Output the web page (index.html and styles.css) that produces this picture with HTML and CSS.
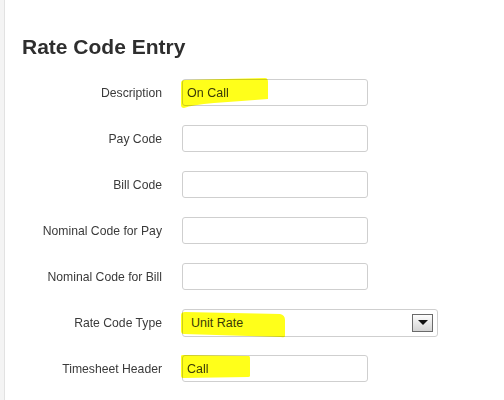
FILE: index.html
```html
<!DOCTYPE html>
<html lang="en">
<head>
    <meta charset="UTF-8">
    <meta name="viewport" content="width=device-width, initial-scale=1.0">
    <title>Rate Code Entry</title>
    <link rel="stylesheet" href="styles.css">
</head>
<body>
    <div class="page">
        <h1>Rate Code Entry</h1>
        <form class="entry-form">
            <label for="description">Description</label>
            <div class="field">
                <input id="description" type="text" value="On Call">
                <svg class="marker" width="88" height="30" viewBox="0 0 88 30">
                    <path d="M-1 4 Q-1 1 3 1 L83 -1 Q86 -1 86 3 L86 20 Q60 22 32 24 Q10 26 2 29 Q-1 29 -1 26 Z" />
                </svg>
            </div>

            <label for="payCode">Pay Code</label>
            <div class="field"><input id="payCode" type="text"></div>

            <label for="billCode">Bill Code</label>
            <div class="field"><input id="billCode" type="text"></div>

            <label for="nomPay">Nominal Code for Pay</label>
            <div class="field"><input id="nomPay" type="text"></div>

            <label for="nomBill">Nominal Code for Bill</label>
            <div class="field"><input id="nomBill" type="text"></div>

            <label>Rate Code Type</label>
            <div class="field wide">
                <div class="select">
                    <span class="select-value">Unit Rate</span>
                    <span class="select-btn"><span class="arrow"></span></span>
                </div>
                <svg class="marker" width="106" height="30" viewBox="0 0 106 30">
                    <path d="M-1 6 Q-1 3 3 3 L98 5 Q103 6 103 11 L103 27 Q103 29 99 28 L2 25 Q-1 25 -1 22 Z" />
                </svg>
            </div>

            <label for="tsHeader">Timesheet Header</label>
            <div class="field">
                <input id="tsHeader" type="text" value="Call">
                <svg class="marker" width="70" height="24" viewBox="0 0 70 24">
                    <path d="M-1 1 Q-1 0 1 0 L67 1 Q68 1 68 3 L68 21 Q68 22 66 22 L1 23 Q-1 23 -1 21 Z" />
                </svg>
            </div>
        </form>
    </div>
</body>
</html>
```
FILE: styles.css
```css
body {
    margin: 0;
    background: #f4f4f4;
    font-family: "Liberation Sans", Arial, sans-serif;
    color: #333;
}
.page {
    margin-left: 4px;
    border-left: 1px solid #e2e2e2;
    background: white;
    min-height: 400px;
    padding: 35px 0 0 17px;
    box-sizing: border-box;
}
h1 {
    margin: 0 0 20px 0;
    font-size: 21px;
    line-height: 24px;
    font-weight: bold;
    color: #2e2e2e;
}
.entry-form {
    display: grid;
    grid-template-columns: 140px auto;
    grid-auto-rows: 27px;
    column-gap: 20px;
    row-gap: 19px;
    align-items: center;
    justify-items: start;
}
.entry-form label {
    justify-self: end;
    font-size: 12.2px;
    color: #3a3a3a;
}
.field {
    position: relative;
    width: 186px;
    height: 27px;
}
.field.wide {
    width: 256px;
    height: 28px;
}
.field input {
    box-sizing: border-box;
    width: 100%;
    height: 27px;
    margin: 0;
    padding: 0 4px;
    border: 1px solid #cfcfcf;
    border-radius: 3px;
    font-family: inherit;
    font-size: 12.5px;
    color: #3a3a3a;
    background: white;
}
.select {
    box-sizing: border-box;
    width: 100%;
    height: 28px;
    border: 1px solid #cfcfcf;
    border-radius: 3px;
    display: flex;
    align-items: center;
    justify-content: space-between;
    padding: 0 4px 0 8px;
    font-size: 12.5px;
    color: #3a3a3a;
    background: white;
}
.select-btn {
    box-sizing: border-box;
    width: 21px;
    height: 18px;
    border: 1px solid #6a6a6a;
    background: linear-gradient(#fdfdfd, #d4d4d4);
    display: flex;
    align-items: center;
    justify-content: center;
}
.arrow {
    width: 0;
    height: 0;
    border-left: 5px solid transparent;
    border-right: 5px solid transparent;
    border-top: 5px solid #111;
}
.marker {
    position: absolute;
    left: 0;
    top: 0;
    overflow: visible;
    mix-blend-mode: multiply;
    pointer-events: none;
}
.marker path {
    fill: #ffff1a;
}
```
